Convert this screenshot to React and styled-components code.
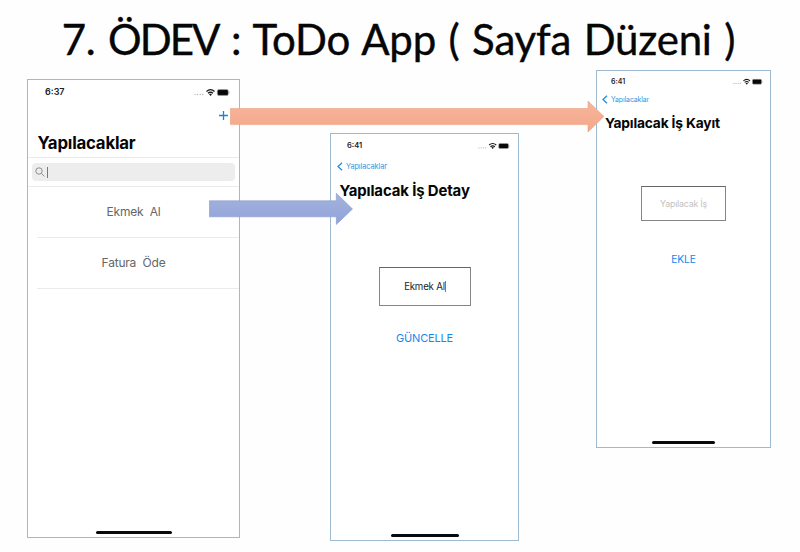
import React from "react";
import styled, { createGlobalStyle } from "styled-components";

const GlobalStyle = createGlobalStyle`
  * { box-sizing: border-box; }
  body { margin: 0; background: #fefefe; }
`;

const Slide = styled.main`
  position: relative;
  width: 800px;
  height: 552px;
  overflow: hidden;
  background: #fefefe;
  font-family: Inter, "Liberation Sans", sans-serif;
`;

const SlideTitle = styled.h1`
  margin: 0;
  height: 70px;
  padding: 9px 3px 0 0;
  text-align: center;
  white-space: nowrap;
  font: 400 42px/60px Lato, "Open Sans", sans-serif;
  letter-spacing: -0.2px;
  word-spacing: 2px;
  -webkit-text-stroke: 0.4px #060606;
  color: #060606;
`;

const Tight = styled.span`
  letter-spacing: -2px;
`;

const Screens = styled.section`
  display: flex;
  align-items: flex-start;
  padding-left: 27px;
`;

const Phone = styled.article`
  display: flex;
  flex-direction: column;
  flex: none;
  width: ${(p) => p.$width}px;
  height: ${(p) => p.$height}px;
  margin: ${(p) => p.$top}px 0 0 ${(p) => p.$left || 0}px;
  border: 1px solid #9dbad0;
  background: #fff;
`;

const StatusBar = styled.div`
  display: flex;
  flex: none;
  align-items: center;
  justify-content: space-between;
  height: ${(p) => p.$height}px;
  padding: 0 ${(p) => p.$right}px 0 ${(p) => p.$left}px;
`;

const Time = styled.span`
  font-size: ${(p) => p.$size}px;
  font-weight: 600;
  line-height: 10px;
  color: #222;
`;

const StatusDrawing = styled.svg`
  display: block;
  flex: none;
`;

const AddBar = styled.div`
  display: flex;
  align-items: center;
  justify-content: flex-end;
  height: 23px;
  padding-right: 11px;
`;

const BackLink = styled.div`
  display: flex;
  align-items: center;
  flex: none;
  gap: ${(p) => p.$gap}px;
  height: 14px;
  margin-top: ${(p) => p.$top}px;
  padding-left: ${(p) => p.$left}px;
  font-size: ${(p) => p.$size}px;
  letter-spacing: ${(p) => p.$spacing}px;
  color: #3494e2;
`;

const ScreenTitle = styled.h2`
  flex: none;
  margin: ${(p) => p.$top}px 0 0 ${(p) => p.$left}px;
  font-size: ${(p) => p.$size}px;
  line-height: 20px;
  font-weight: 700;
  letter-spacing: ${(p) => p.$spacing}px;
  white-space: nowrap;
  color: #050505;
`;

const SearchArea = styled.div`
  height: 30px;
  margin-top: 4px;
  padding: 5px 4px;
  border-top: 1px solid #ebebec;
  border-bottom: 1px solid #ebebec;
`;

const SearchField = styled.div`
  display: flex;
  align-items: center;
  gap: 2px;
  height: 18px;
  padding-left: 3px;
  border-radius: 4px;
  background: #ededee;
`;

const Caret = styled.i`
  width: 1px;
  height: ${(p) => p.$height}px;
  background: #4a78ee;
`;

const Task = styled.div`
  display: flex;
  align-items: center;
  justify-content: center;
  height: ${(p) => p.$height}px;
  margin-left: 9px;
  padding-right: 9px;
  border-bottom: 1px solid #ebebec;
  font-size: 12px;
  letter-spacing: ${(p) => p.$spacing}px;
  white-space: pre;
  color: #666;
`;

const InputBox = styled.div`
  display: flex;
  flex: none;
  align-items: center;
  justify-content: center;
  width: ${(p) => p.$width}px;
  height: ${(p) => p.$height}px;
  margin: ${(p) => p.$top}px 0 0 ${(p) => p.$left}px;
  border: 1px solid #858585;
  border-top-color: #666;
  font-size: ${(p) => p.$size}px;
  letter-spacing: ${(p) => p.$spacing}px;
  white-space: nowrap;
  color: ${(p) => (p.$placeholder ? "#c2c2c2" : "#222")};
`;

const Action = styled.div`
  flex: none;
  margin-top: ${(p) => p.$top}px;
  text-align: center;
  font-size: ${(p) => p.$size}px;
  line-height: 16px;
  letter-spacing: ${(p) => p.$spacing}px;
  color: #1687ec;
`;

const HomeBar = styled.div`
  flex: none;
  align-self: center;
  width: ${(p) => p.$width}px;
  height: 2.6px;
  margin: auto 0 ${(p) => p.$bottom}px;
  border-radius: 2px;
  background: #090909;
`;

const Arrow = styled.svg`
  position: absolute;
  left: ${(p) => p.$x}px;
  top: ${(p) => p.$y}px;
`;

function StatusIcons({ width, height }) {
  return (
    <StatusDrawing width={width} height={height} viewBox="0 0 36 9">
      <g fill="#b5b5b5">
        <circle cx="1" cy="6.5" r=".7" />
        <circle cx="3.6" cy="6.5" r=".7" />
        <circle cx="6.2" cy="6.5" r=".7" />
        <circle cx="8.8" cy="6.5" r=".7" />
      </g>
      <g fill="none" stroke="#171717" strokeWidth="1.3">
        <path d="M12.5 3.4Q16.5 0 20.5 3.4" />
        <path d="M14 5.3Q16.5 3.2 19 5.3" />
      </g>
      <path d="M15 6.3Q16.5 5.2 18 6.3L16.5 8Z" fill="#171717" />
      <rect x="23.3" y="1.6" width="11" height="5.8" rx="1.5" fill="#080808" stroke="#aaa" strokeWidth=".6" />
      <path d="M35.2 3.5v2" stroke="#aaa" strokeWidth=".7" />
    </StatusDrawing>
  );
}

function Chevron() {
  return (
    <svg width="6" height="9" viewBox="0 0 6 9" fill="none" stroke="#258be2" strokeWidth="1.3">
      <path d="M5 .7 1 4.5 5 8.3" />
    </svg>
  );
}

export default function App() {
  return (
    <>
      <GlobalStyle />
      <Slide>
        <SlideTitle>7. <Tight>ÖDEV</Tight> : ToDo App ( Sayfa Düzeni )</SlideTitle>
        <Screens>
          <Phone $width={213} $height={459} $top={9}>
            <StatusBar $height={24} $left={17} $right={9}>
              <Time $size={9}>6:37</Time>
              <StatusIcons width={36} height={9} />
            </StatusBar>
            <AddBar>
              <svg width="9" height="9" stroke="#1583e0" strokeWidth="1.3">
                <path d="M4.5 0v9M0 4.5h9" />
              </svg>
            </AddBar>
            <ScreenTitle $top={6} $left={9.5} $size={16.8} $spacing={-0.2}>Yapılacaklar</ScreenTitle>
            <SearchArea>
              <SearchField>
                <svg width="10" height="10" fill="none" stroke="#858588" strokeWidth=".9">
                  <circle cx="4" cy="4" r="3.2" />
                  <path d="m6.4 6.4 3 3" />
                </svg>
                <Caret $height={11} />
              </SearchField>
            </SearchArea>
            <Task $height={50.5} $spacing={-0.2}>{"Ekmek  Al"}</Task>
            <Task $height={51.5} $spacing={-0.2}>{"Fatura  Öde"}</Task>
            <HomeBar $width={76} $bottom={3.5} />
          </Phone>

          <Phone $width={189} $height={408} $top={63} $left={90}>
            <StatusBar $height={23} $left={16} $right={8}>
              <Time $size={7.5}>6:41</Time>
              <StatusIcons width={32} height={8} />
            </StatusBar>
            <BackLink $top={2} $left={6} $gap={3} $size={7.4} $spacing={-0.1}>
              <Chevron />Yapılacaklar
            </BackLink>
            <ScreenTitle $top={8} $left={8.5} $size={14.9} $spacing={-0.12}>Yapılacak İş Detay</ScreenTitle>
            <InputBox $width={92} $height={39} $top={66} $left={48} $size={9.7} $spacing={-0.2}>
              Ekmek Al<Caret $height={11} />
            </InputBox>
            <Action $top={24} $size={11} $spacing={-0.2}>GÜNCELLE</Action>
            <HomeBar $width={68} $bottom={3} />
          </Phone>

          <Phone $width={175} $height={378} $top={0} $left={77}>
            <StatusBar $height={21} $left={14} $right={7}>
              <Time $size={7}>6:41</Time>
              <StatusIcons width={30} height={7.5} />
            </StatusBar>
            <BackLink $top={0.5} $left={5} $gap={3} $size={6.9} $spacing={-0.1}>
              <Chevron />Yapılacaklar
            </BackLink>
            <ScreenTitle $top={6.5} $left={8} $size={13.8} $spacing={-0.18}>Yapılacak İş Kayıt</ScreenTitle>
            <InputBox $width={85} $height={35} $top={53} $left={44} $size={8.8} $spacing={-0.2} $placeholder>
              Yapılacak İş
            </InputBox>
            <Action $top={30} $size={10.3} $spacing={-0.2}>EKLE</Action>
            <HomeBar $width={63} $bottom={3} />
          </Phone>
        </Screens>

        <Arrow $x={230} $y={100} width="376" height="33">
          <defs>
            <linearGradient id="peach" x1="0" y1="0" x2="0" y2="1">
              <stop stopColor="#f7b59c" />
              <stop offset="1" stopColor="#f4a78a" />
            </linearGradient>
          </defs>
          <path d="M.3 8.5H358V1L374 16.5 358 32V24.6H.3Z" fill="url(#peach)" stroke="#eda27e" strokeWidth=".6" />
        </Arrow>
        <Arrow $x={209} $y={192} width="145" height="34">
          <defs>
            <linearGradient id="periwinkle" x1="0" y1="0" x2="0" y2="1">
              <stop stopColor="#a5b3dd" />
              <stop offset="1" stopColor="#8fa3d9" />
            </linearGradient>
          </defs>
          <path d="M.3 8.8H127.3V1.2L143.5 17 127.3 32.5V24.8H.3Z" fill="url(#periwinkle)" stroke="#8798cf" strokeWidth=".6" />
        </Arrow>
      </Slide>
    </>
  );
}
